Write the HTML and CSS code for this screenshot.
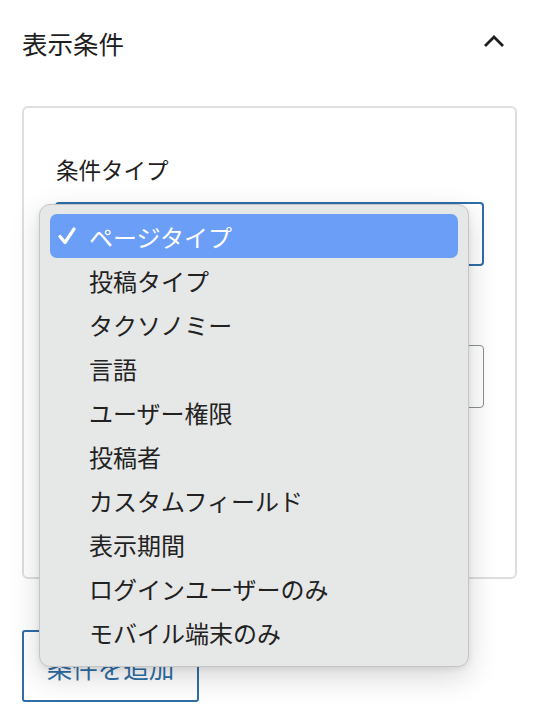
FILE: index.html
```html
<!DOCTYPE html>
<html lang="ja">
<head>
<meta charset="utf-8">
<link rel="stylesheet" href="styles.css">
</head>
<body>
<div class="panel">
  <div class="panel-header">
    <h2 class="panel-title">表示条件</h2>
    <svg class="chevron" width="22" height="14" viewBox="0 0 22 14"><polyline points="2,12 11,3 20,12" fill="none" stroke="#1e1e1e" stroke-width="2.8"/></svg>
  </div>
  <div class="panel-body">
    <div class="card">
      <div class="field-label">条件タイプ</div>
      <div class="select select-active"></div>
      <div class="select select-value"></div>
    </div>
    <button class="add-btn">条件を追加</button>
  </div>
  <ul class="menu">
    <li class="menu-item selected"><svg class="check" width="18" height="18" viewBox="0 0 18 18"><polyline points="2,9.5 7,15.5 16,2" fill="none" stroke="#fff" stroke-width="3.2" stroke-linecap="round" stroke-linejoin="round"/></svg>ページタイプ</li>
    <li class="menu-item">投稿タイプ</li>
    <li class="menu-item">タクソノミー</li>
    <li class="menu-item">言語</li>
    <li class="menu-item">ユーザー権限</li>
    <li class="menu-item">投稿者</li>
    <li class="menu-item">カスタムフィールド</li>
    <li class="menu-item">表示期間</li>
    <li class="menu-item">ログインユーザーのみ</li>
    <li class="menu-item">モバイル端末のみ</li>
  </ul>
</div>
</body>
</html>
```
FILE: styles.css
```css
* { box-sizing: border-box; }
html, body { margin: 0; padding: 0; background: #fff; }
body {
  font-family: "Noto Sans CJK JP", "Noto Sans", sans-serif;
  color: #1e1e1e;
  width: 534px;
  height: 714px;
  overflow: hidden;
}
.panel { position: relative; }
.panel-header {
  height: 86px;
  display: flex;
  align-items: center;
  justify-content: space-between;
  padding: 0 29px 0 22px;
}
.panel-title {
  margin: 0;
  font-size: 25.5px;
  font-weight: 400;
  line-height: 30px;
  color: #1e1e1e;
}
.chevron { display: block; margin-top: -4px; }
.panel-body { padding: 20px 17px 0 22px; }
.card {
  border: 2px solid #dedede;
  border-radius: 6px;
  height: 473px;
  padding: 46px 31px 0 32px;
}
.field-label {
  font-size: 22.5px;
  line-height: 30px;
  color: #1e1e1e;
}
.select {
  height: 64px;
  border-radius: 4px;
}
.select-active {
  margin-top: 18px;
  margin-left: -1px;
  border: 2px solid #2f6ea8;
}
.select-value {
  margin-top: 79px;
  margin-left: -1px;
  height: 63px;
  border: 1.5px solid #8c8f94;
}
.add-btn {
  margin-top: 51px;
  width: 177px;
  height: 72px;
  border: 2px solid #2f6ea8;
  border-radius: 3px;
  background: #fff;
  color: #2f6ea8;
  font-family: inherit;
  font-size: 25.5px;
  padding: 0;
}
.menu {
  position: absolute;
  left: 39px;
  top: 204px;
  width: 430px;
  height: 463px;
  margin: 0;
  padding: 9px 10px;
  list-style: none;
  background: #e6e7e7;
  border: 1px solid #c4c5c6;
  border-radius: 11px;
  box-shadow: 0 10px 30px rgba(0,0,0,0.16), 0 2px 6px rgba(0,0,0,0.08);
}
.menu-item {
  position: relative;
  height: 44px;
  display: flex;
  align-items: center;
  padding-left: 39px;
  font-size: 24px;
  color: #222;
  border-radius: 7px;
}
.menu-item.selected {
  background: #6a9ef7;
  color: #fff;
}
.check { position: absolute; left: 8px; top: 13px; }
```
